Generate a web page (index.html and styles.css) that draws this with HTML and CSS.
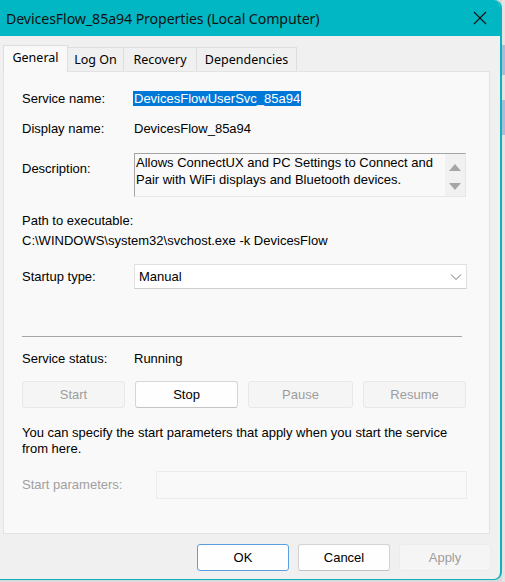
FILE: index.html
```html
<!DOCTYPE html>
<html>
<head>
<meta charset="utf-8">
<link rel="stylesheet" href="styles.css">
</head>
<body>
<div class="screen">
  <div class="window">
    <div class="titlebar">
      <span class="title">DevicesFlow_85a94 Properties (Local Computer)</span>
      <svg class="close" width="14" height="14" viewBox="0 0 14 14"><path d="M1 1 L13 13 M13 1 L1 13" stroke="#111" stroke-width="1.1" fill="none"/></svg>
    </div>
    <div class="client">
      <div class="tabs">
        <div class="tab active tab-general">General</div>
        <div class="tab tab-logon">Log On</div>
        <div class="tab tab-recovery">Recovery</div>
        <div class="tab tab-deps">Dependencies</div>
      </div>
      <div class="panel">
        <div class="field f-service">
          <span class="label">Service name:</span>
          <span class="value"><span class="selected">DevicesFlowUserSvc_85a94</span></span>
        </div>
        <div class="field f-display">
          <span class="label">Display name:</span>
          <span class="value">DevicesFlow_85a94</span>
        </div>
        <div class="field f-desc">
          <span class="label label-desc">Description:</span>
          <div class="descbox">
            <div class="desctext">Allows ConnectUX and PC Settings to Connect and Pair with WiFi displays and Bluetooth devices.</div>
            <div class="scrollbar">
              <svg width="12" height="8" viewBox="0 0 12 8"><path d="M0 8 L6 1 L12 8 Z" fill="#a6a6a6"/></svg>
              <svg width="12" height="8" viewBox="0 0 12 8"><path d="M0 0 L6 7 L12 0 Z" fill="#a6a6a6"/></svg>
            </div>
          </div>
        </div>
        <div class="path-label">Path to executable:</div>
        <div class="path-value">C:\WINDOWS\system32\svchost.exe -k DevicesFlow</div>
        <div class="field f-startup">
          <span class="label">Startup type:</span>
          <div class="combo">
            <span>Manual</span>
            <svg width="12" height="8" viewBox="0 0 12 8"><path d="M1 1.5 L6 6.5 L11 1.5" stroke="#707070" stroke-width="1" fill="none"/></svg>
          </div>
        </div>
        <div class="divider"></div>
        <div class="field f-status">
          <span class="label">Service status:</span>
          <span class="value">Running</span>
        </div>
        <div class="svc-buttons">
          <div class="btn disabled">Start</div>
          <div class="btn">Stop</div>
          <div class="btn disabled">Pause</div>
          <div class="btn disabled">Resume</div>
        </div>
        <p class="hint">You can specify the start parameters that apply when you start the service<br>from here.</p>
        <div class="field f-params">
          <span class="label muted">Start parameters:</span>
          <div class="params-input"></div>
        </div>
      </div>
      <div class="dialog-buttons">
        <div class="dbtn default">OK</div>
        <div class="dbtn">Cancel</div>
        <div class="dbtn disabled">Apply</div>
      </div>
    </div>
  </div>
  <div class="strip">
    <div class="patch patch-1"></div>
    <div class="patch patch-2"></div>
  </div>
</div>
</body>
</html>
```

FILE: styles.css
```css
* { box-sizing: border-box; }
html, body { margin: 0; padding: 0; }
body {
  background: #d9d9d9;
  font-family: "Liberation Sans", Arial, sans-serif;
  font-size: 13px;
  color: #000;
}
.screen {
  display: flex;
  width: 505px;
  height: 582px;
  overflow: hidden;
}
.window {
  width: 502px;
  height: 580px;
  flex: none;
  background: #f0f0f0;
  border-right: 2px solid #12b0bd;
  border-bottom: 1px solid #12b0bd;
  border-radius: 0 8px 8px 0;
  overflow: hidden;
  display: flex;
  flex-direction: column;
}
.titlebar {
  height: 36px;
  flex: none;
  background: #00b7c3;
  display: flex;
  align-items: center;
  justify-content: space-between;
  padding: 0 13px 0 6px;
}
.title {
  font-family: "Noto Sans", "Open Sans", sans-serif;
  font-size: 14.2px;
  color: #111;
  letter-spacing: -0.1px;
}
.close { display: block; }

.client {
  padding: 9px 0 0 3px;
  display: flex;
  flex-direction: column;
  flex: 1;
}
.tabs {
  display: flex;
  align-items: flex-end;
  margin-bottom: -1px;
  position: relative;
  z-index: 1;
}
.tab {
  font-family: "Noto Sans", "Open Sans", sans-serif;
  font-size: 12.5px;
  height: 24px;
  margin-bottom: 1px;
  display: flex;
  align-items: center;
  justify-content: center;
  background: #f0f0f0;
  border: 1px solid #dedede;
  border-bottom: none;
  border-left: none;
  color: #000;
}
.tab.active {
  height: 27px;
  margin-bottom: 0;
  background: #f9f9f9;
  border-left: 1px solid #dedede;
  align-items: flex-start;
  padding-top: 3px;
}
.tab-general { width: 65px; }
.tab-logon { width: 56px; }
.tab-recovery { width: 73px; }
.tab-deps { width: 100px; }

.panel {
  width: 487px;
  height: 463px;
  background: #f9f9f9;
  border: 1px solid #e3e3e3;
  padding: 19px 0 0 18px;
  display: flex;
  flex-direction: column;
}
.field {
  display: grid;
  grid-template-columns: 112px auto;
  align-items: center;
  line-height: 16px;
}
.f-display { margin-top: 14px; }
.f-desc { margin-top: 16px; align-items: start; }
.label-desc { padding-top: 8px; }
.selected {
  background: #0078d7;
  color: #fff;
  padding: 0 1px 0 1px;
  margin-left: -1px;
}
.descbox {
  width: 332px;
  height: 44px;
  border: 1px solid;
  border-color: #a5a5a5 #e6e6e6 #e6e6e6 #a5a5a5;
  display: flex;
  background: #f9f9f9;
}
.desctext {
  flex: 1;
  line-height: 17px;
  padding: 0 0 0 1px;
}
.scrollbar {
  width: 20px;
  background: #f1f1f1;
  display: flex;
  flex-direction: column;
  align-items: center;
  padding-top: 9px;
  gap: 12px;
}
.scrollbar svg { display: block; }
.path-label { margin-top: 16px; line-height: 16px; }
.path-value { margin-top: 4px; line-height: 16px; }
.f-startup { margin-top: 15px; }
.combo {
  width: 333px;
  height: 25px;
  background: #fff;
  border: 1px solid #e0e0e0;
  border-bottom-color: #cfcfcf;
  display: flex;
  align-items: center;
  justify-content: space-between;
  padding: 0 4px 0 4px;
}
.combo svg { display: block; }
.divider {
  margin-top: 47px;
  width: 440px;
  height: 1px;
  background: #a5a5a5;
}
.f-status { margin-top: 14px; }
.svc-buttons {
  margin-top: 14px;
  width: 444px;
  display: grid;
  grid-template-columns: 103px 103px 105px 103px;
  column-gap: 10px;
}
.btn {
  height: 27px;
  display: flex;
  align-items: center;
  justify-content: center;
  background: #fefefe;
  border: 1px solid #d6d6d6;
  border-bottom-color: #c4c4c4;
  border-radius: 3px;
  color: #000;
}
.btn.disabled {
  background: #f5f5f5;
  border-color: #e8e8e8;
  color: #9d9d9d;
}
.hint {
  margin: 17px 0 0 0;
  line-height: 16px;
}
.f-params {
  margin-top: 14px;
  grid-template-columns: 134px auto;
}
.muted { color: #a0a0a0; }
.params-input {
  width: 311px;
  height: 28px;
  background: #f9f9f9;
  border: 1px solid #ececec;
}
.dialog-buttons {
  display: flex;
  justify-content: flex-end;
  gap: 9px;
  margin-top: 10px;
  padding-right: 9px;
}
.dbtn {
  width: 92px;
  height: 27px;
  display: flex;
  align-items: center;
  justify-content: center;
  background: #fefefe;
  border: 1px solid #d3d3d3;
  border-bottom-color: #c2c2c2;
  border-radius: 3px;
}
.dbtn.default {
  border: 1px solid #5b9fe0;
}
.dbtn.disabled {
  background: #f5f5f5;
  border-color: #ececec;
  color: #9d9d9d;
}
.strip {
  flex: 1;
  background: #e4e4e4;
  padding-top: 45px;
  display: flex;
  flex-direction: column;
}
.patch {
  background: #a9bdd6;
  height: 30px;
}
.patch-2 { margin-top: 25px; height: 35px; }
```
